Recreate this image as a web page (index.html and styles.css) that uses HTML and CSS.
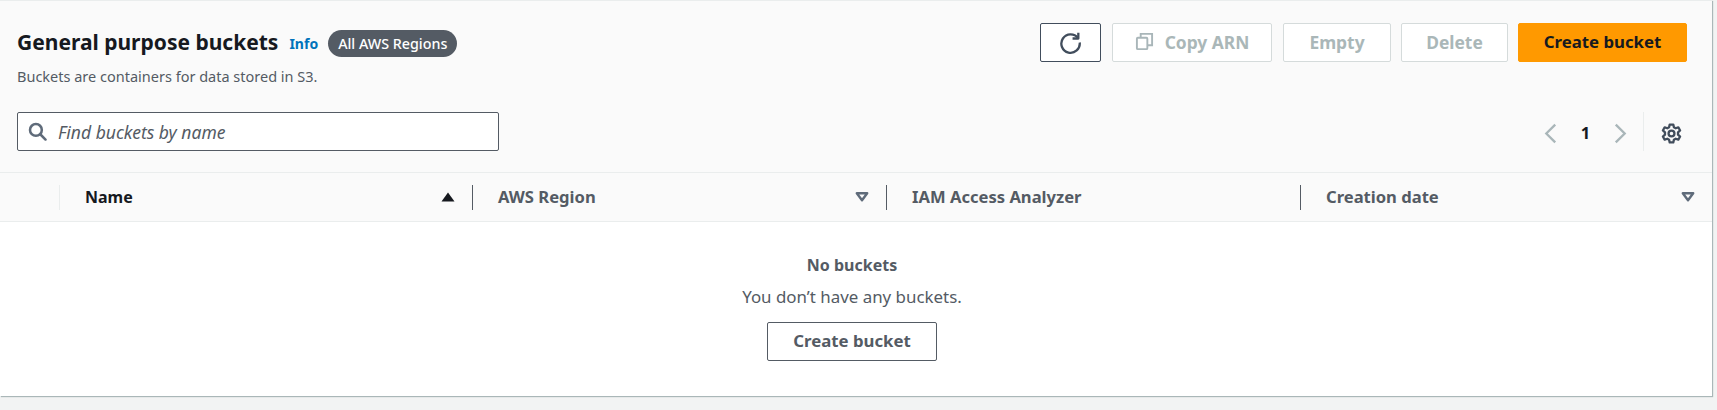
FILE: index.html
```html
<!DOCTYPE html>
<html lang="en">
<head>
<meta charset="utf-8">
<title>General purpose buckets</title>
<link rel="stylesheet" href="styles.css">
</head>
<body>
<main class="card">
  <header class="head">
    <div class="top">
      <div class="intro">
        <div class="title-row">
          <h1 class="title">General purpose buckets</h1>
          <a class="info">Info</a>
          <span class="badge">All AWS Regions</span>
        </div>
        <p class="sub">Buckets are containers for data stored in S3.</p>
      </div>
      <div class="actions">
        <button class="btn btn-icon"><svg class="ico" viewBox="0 0 20 20" width="23" height="23" fill="none" stroke="#414d5c" stroke-width="2"><path d="M16.500 6.200A8 8 0 1 0 18 10"/><path d="M16.800 1.500v5h-5" stroke-linejoin="round"/></svg></button>
        <button class="btn btn-off btn-arn" disabled><svg class="ico" viewBox="0 0 20 20" width="19" height="19" fill="none" stroke="#a9b6b9" stroke-width="2"><rect x="2" y="6" width="11" height="12" rx="1"/><path d="M6 6V2h12v12h-5"/></svg>Copy ARN</button>
        <button class="btn btn-off btn-empty" disabled>Empty</button>
        <button class="btn btn-off btn-del" disabled>Delete</button>
        <button class="btn btn-primary">Create bucket</button>
      </div>
    </div>
    <div class="filter">
      <label class="search">
        <svg viewBox="0 0 18 18" width="19" height="19" fill="none" stroke="#5f6b7a" stroke-width="2.400"><circle cx="7.500" cy="7.500" r="5.600"/><path d="M11.600 11.600l5 5" stroke-linecap="round"/></svg>
        <span class="placeholder">Find buckets by name</span>
      </label>
      <div class="pager">
        <svg class="pager-ico" viewBox="0 0 12 20" width="13" height="21" fill="none" stroke="#a9b6b9" stroke-width="2.200"><path d="M10.500 1.500L2 10l8.500 8.500"/></svg>
        <span class="page">1</span>
        <svg class="pager-ico" viewBox="0 0 12 20" width="13" height="21" fill="none" stroke="#a9b6b9" stroke-width="2.200"><path d="M1.500 1.500L10 10l-8.500 8.500"/></svg>
        <span class="prefs"><svg class="pager-ico" viewBox="0 0 20 20" width="21" height="21" fill="none" stroke="#414d5c" stroke-width="2.200"><path d="M8.300 1.500h3.400l.6 2.600 1.700.9 2.500-.9 1.700 3-2 1.800v2.200l2 1.800-1.700 3-2.500-.9-1.700.9-.6 2.600H8.300l-.6-2.600-1.700-.9-2.500.9-1.700-3 2-1.800V8.900l-2-1.800 1.700-3 2.500.9 1.700-.9z" stroke-linejoin="round"/><circle cx="10" cy="10" r="2.800"/></svg></span>
      </div>
    </div>
  </header>
  <div class="thead">
    <div class="th th-check"></div>
    <div class="th th-first"><span class="th-label th-active">Name</span><svg viewBox="0 0 14 10" width="14" height="10"><path d="M7 0.500L13.500 9.500H0.500z" fill="#16191f"/></svg></div>
    <div class="th"><span class="th-label">AWS Region</span><svg viewBox="0 0 14 10" width="14" height="10"><path d="M1.800 1.200h10.400L7 8.300z" fill="none" stroke="#5f6b7a" stroke-width="2.400" stroke-linejoin="round"/></svg></div>
    <div class="th"><span class="th-label">IAM Access Analyzer</span></div>
    <div class="th"><span class="th-label">Creation date</span><svg viewBox="0 0 14 10" width="14" height="10"><path d="M1.800 1.200h10.400L7 8.300z" fill="none" stroke="#5f6b7a" stroke-width="2.400" stroke-linejoin="round"/></svg></div>
  </div>
  <section class="empty">
    <strong class="empty-title">No buckets</strong>
    <p class="empty-text">You don’t have any buckets.</p>
    <button class="btn btn-line">Create bucket</button>
  </section>
</main>
</body>
</html>
```

FILE: styles.css
```css
* { box-sizing: border-box; }
html, body { height: 100%; }
body {
  margin: 0;
  background: #f2f3f3;
  color: #16191f;
  font-family: "Noto Sans", "Liberation Sans", sans-serif;
  font-size: 16px;
  overflow: hidden;
}
.card {
  width: 1712px;
  height: 396px;
  background: #fff;
  border-top: 1px solid #eaeded;
  box-shadow: 1px 1px 1px #aab7b8;
  display: flex;
  flex-direction: column;
}
.head {
  height: 171px;
  background: #fafafa;
  padding: 22px 25px 0 17px;
}
.top { display: flex; justify-content: space-between; align-items: flex-start; }
.title-row { display: flex; align-items: center; margin-top: 6px; height: 28px; }
.title { margin: 0 0 2px; font-size: 21px; line-height: 26px; font-weight: 700; }
.info { margin-left: 11px; font-size: 14px; font-weight: 700; color: #0073bb; }
.badge {
  margin-left: 10px;
  height: 27px;
  padding: 0 10px;
  border-radius: 14px;
  background: #545b64;
  color: #fff;
  font-size: 14.300px;
  font-weight: 500;
  line-height: 27px;
}
.sub { margin: 10px 0 0; font-size: 14.500px; line-height: 18px; color: #545b64; }
.actions { display: flex; gap: 10px; }
.btn {
  font-family: inherit;
  height: 39px;
  padding: 0 0 2px;
  border: 1px solid #545b64;
  border-radius: 2px;
  background: #fff;
  color: #545b64;
  font-size: 16.800px;
  font-weight: 700;
  display: flex;
  align-items: center;
  justify-content: center;
}
.btn-icon { width: 61px; border-color: #414d5c; padding: 0; }
.btn-off { border-color: #d5dbdb; color: #aab7b8; font-size: 17.400px; }
.btn-arn { width: 160px; gap: 11px; margin-left: 1px; }
.btn-empty { width: 108px; margin-left: 1px; }
.btn-del { width: 107px; }
.btn-primary { width: 169px; border-color: #ff9900; background: #ff9900; color: #16191f; }
.filter { display: flex; justify-content: space-between; align-items: center; margin-top: 27px; }
.search {
  width: 482px;
  height: 39px;
  display: flex;
  align-items: center;
  gap: 11px;
  padding-left: 10px;
  background: #fff;
  border: 1px solid #545b64;
  border-radius: 2px;
}
.placeholder { font-size: 17.500px; font-style: italic; color: #545b64; }
.pager { display: flex; align-items: center; margin-right: 5px; height: 39px; }
.pager-ico { margin-top: 4px; }
.page { width: 57px; text-align: center; font-size: 16.500px; font-weight: 700; margin-top: 2px; }
.prefs {
  margin-left: 16px;
  padding-left: 17px;
  height: 39px;
  display: flex;
  align-items: center;
  border-left: 1px solid #eaeded;
}
.thead {
  height: 50px;
  flex: none;
  display: grid;
  grid-template-columns: 59px 413px 414px 414px 412px;
  align-items: center;
  background: #fafafa;
  border-top: 1px solid #eaeded;
  border-bottom: 1px solid #eaeded;
}
.th {
  height: 25px;
  padding: 0 17px 0 25px;
  display: flex;
  align-items: center;
  justify-content: space-between;
  border-left: 1px solid #545b64;
}
.th-check { border-left: 0; }
.th-first { border-left-color: #eaeded; }
.th-label { font-size: 16.600px; line-height: 22px; font-weight: 700; color: #545b64; }
.th-active { color: #16191f; font-size: 16px; }
.empty { flex: 1; display: flex; flex-direction: column; align-items: center; padding: 32px 8px 0 0; }
.empty-title { font-size: 16px; line-height: 22px; font-weight: 700; color: #545b64; }
.empty-text { margin: 10px 0 0; font-size: 16.900px; line-height: 22px; color: #545b64; }
.btn-line { margin-top: 14px; width: 170px; }
```
